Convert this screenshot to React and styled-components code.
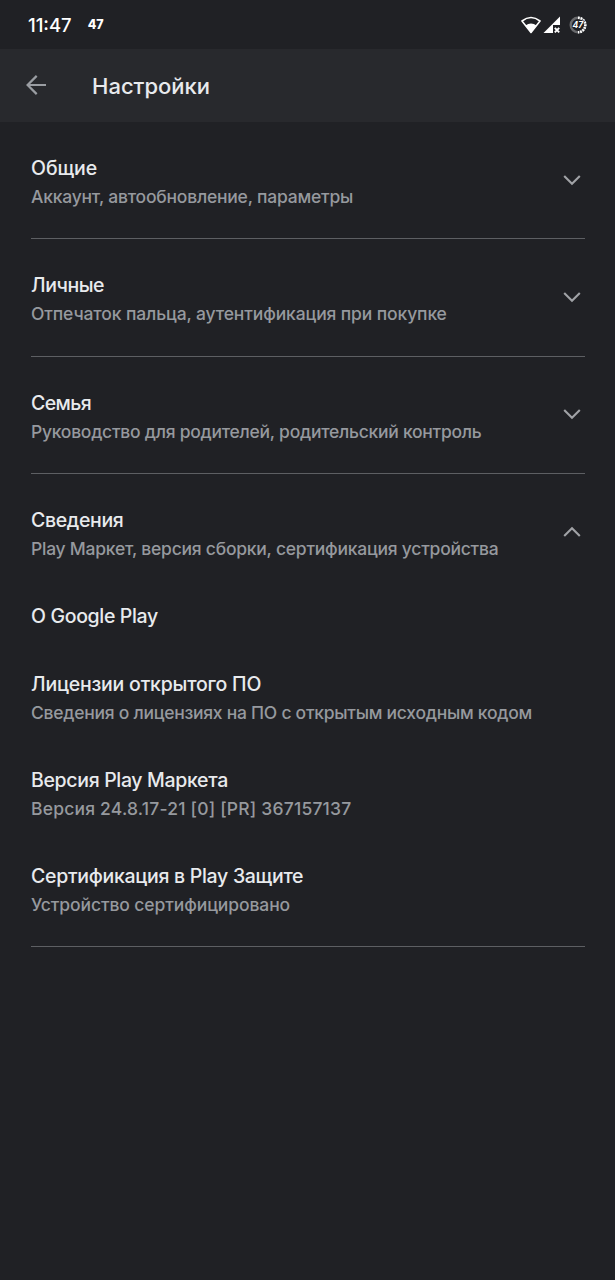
import React from 'react';
import styled, { createGlobalStyle } from 'styled-components';

const GlobalStyle = createGlobalStyle`
  * { box-sizing: border-box; }
  html, body { margin: 0; background: #202125; }
  body { font-family: Inter, "Noto Sans", sans-serif; -webkit-font-smoothing: antialiased; }
`;

const Screen = styled.div`
  width: 100%;
  max-width: 615px;
  min-height: 1280px;
  background: #202125;
  color: #e8eaed;
`;

const StatusBar = styled.div`
  display: flex;
  align-items: center;
  justify-content: space-between;
  height: 49px;
  padding: 0 28px 0 28px;
`;

const StatusGroup = styled.div`
  display: flex;
  align-items: center;
`;

const Clock = styled.span`
  font-size: 18.5px;
  line-height: 24px;
  font-weight: 500;
  letter-spacing: 0;
  color: #fff;
  padding-top: 1px;
`;

const BatteryText = styled.span`
  margin-left: 16px;
  font-size: 12.5px;
  line-height: 24px;
  font-weight: 800;
  color: #fff;
`;

const StatusIcon = styled.svg`
  display: block;
  margin-left: ${(p) => p.$gap || 0}px;
`;

const Toolbar = styled.header`
  display: flex;
  align-items: center;
  height: 73px;
  padding: 0 26px;
  background: #28292d;
`;

const BackButton = styled.button`
  display: flex;
  width: 20px;
  height: 20px;
  padding: 0;
  margin: 0 46px 2px 0;
  border: 0;
  background: none;
`;

const Heading = styled.h1`
  margin: 1px 0 0;
  font-size: 22px;
  line-height: 30px;
  font-weight: 500;
`;

const Content = styled.main`
  padding: 0 30px 0 31px;
`;

const Section = styled.section`
  min-height: 117.4px;
  padding: 32px 0 27px;
  border-bottom: 1px solid #5d5f63;
`;

const SectionHeader = styled.div`
  display: flex;
  align-items: center;
  justify-content: space-between;
  padding-right: 4px;
`;

const Item = styled.div`
  margin-top: ${(p) => p.$gap || 39}px;
`;

const Title = styled.div`
  font-size: 19.5px;
  line-height: 28px;
  font-weight: 500;
  letter-spacing: ${(p) => p.$spacing || 0}px;
  white-space: nowrap;
`;

const Subtitle = styled.div`
  margin-top: 1px;
  font-size: 17.5px;
  line-height: 28px;
  font-weight: 500;
  color: #96999e;
  letter-spacing: ${(p) => p.$spacing || 0}px;
  white-space: nowrap;
`;

const Chevron = styled.svg`
  display: block;
  flex: none;
  margin-bottom: 6px;
  transform: ${(p) => (p.$open ? 'rotate(180deg)' : 'none')};
`;

const sections = [
  { title: 'Общие', sub: 'Аккаунт, автообновление, параметры', ts: -0.06, ss: -0.22 },
  { title: 'Личные', sub: 'Отпечаток пальца, аутентификация при покупке', ts: -0.45, ss: -0.125 },
  { title: 'Семья', sub: 'Руководство для родителей, родительский контроль', ts: -0.6, ss: -0.26 },
  {
    title: 'Сведения',
    sub: 'Play Маркет, версия сборки, сертификация устройства',
    ts: -0.35,
    ss: -0.24,
    items: [
      { title: 'О Google Play', ts: -0.34, gap: 38.5 },
      { title: 'Лицензии открытого ПО', sub: 'Сведения о лицензиях на ПО с открытым исходным кодом', ts: -0.21, ss: -0.265, gap: 40 },
      { title: 'Версия Play Маркета', sub: 'Версия 24.8.17-21 [0] [PR] 367157137', ts: -0.33, ss: 0.2 },
      { title: 'Сертификация в Play Защите', sub: 'Устройство сертифицировано', ts: -0.29, ss: -0.1 },
    ],
  },
];

function Labels({ entry }) {
  return (
    <div>
      <Title $spacing={entry.ts}>{entry.title}</Title>
      {entry.sub && <Subtitle $spacing={entry.ss}>{entry.sub}</Subtitle>}
    </div>
  );
}

export default function App() {
  return (
    <Screen>
      <GlobalStyle />
      <StatusBar>
        <StatusGroup>
          <Clock>11:47</Clock>
          <BatteryText>47</BatteryText>
        </StatusGroup>
        <StatusGroup>
          <StatusIcon width="20" height="18" viewBox="0 0 20 18">
            <path d="M1 5 Q10 -2 19 5 L10 16.5 Z" fill="none" stroke="#fff" strokeWidth="1.6" strokeLinejoin="round" />
            <path d="M4.4 9.4 Q10 5.6 15.6 9.4 L10 16.5 Z" fill="#fff" />
          </StatusIcon>
          <StatusIcon $gap={2} width="18" height="18" viewBox="0 0 18 18">
            <path d="M17 0.5 V9 H10 V17 H0.5 Z" fill="#fff" />
            <path d="M11.8 11.8 L16.2 16.4 M16.2 11.8 L11.8 16.4" stroke="#fff" strokeWidth="1.9" />
          </StatusIcon>
          <StatusIcon $gap={8} width="18" height="18" viewBox="0 0 18 18">
            <circle cx="9" cy="9" r="7.3" fill="none" stroke="#68696c" strokeWidth="2.4" />
            <path d="M9 1.7 A7.3 7.3 0 0 1 9 16.3" fill="none" stroke="#fff" strokeWidth="2.6" strokeDasharray="1.7 1" />
            <text x="8.8" y="12" textAnchor="middle" fontSize="8.5" fontWeight="700" fontStyle="italic" fill="#fff" stroke="#202125" strokeWidth="1.2" paintOrder="stroke">47</text>
          </StatusIcon>
        </StatusGroup>
      </StatusBar>
      <Toolbar>
        <BackButton aria-label="Назад">
          <svg width="20" height="20" viewBox="0 0 20 20" fill="none" stroke="#9a9da2" strokeWidth="2.2">
            <path d="M20 10 H1.7 M10.7 0.9 L1.6 10 L10.7 19.1" />
          </svg>
        </BackButton>
        <Heading>Настройки</Heading>
      </Toolbar>
      <Content>
        {sections.map((s) => (
          <Section key={s.title}>
            <SectionHeader>
              <Labels entry={s} />
              <Chevron $open={!!s.items} width="18" height="12" viewBox="0 0 18 12">
                <path d="M1.2 2 L9 9.8 L16.8 2" fill="none" stroke="#a0a2a6" strokeWidth="2.1" />
              </Chevron>
            </SectionHeader>
            {s.items?.map((item) => (
              <Item key={item.title} $gap={item.gap}>
                <Labels entry={item} />
              </Item>
            ))}
          </Section>
        ))}
      </Content>
    </Screen>
  );
}
